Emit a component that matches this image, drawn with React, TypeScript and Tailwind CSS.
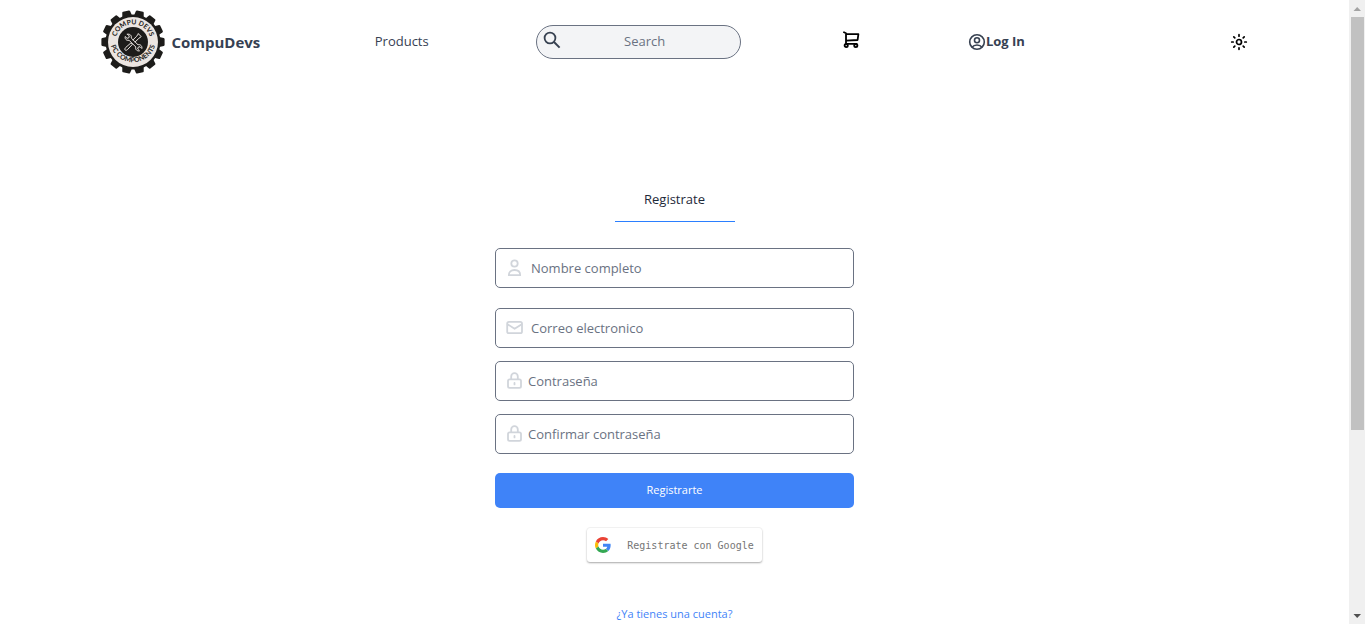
import React from "react";

const teeth = Array.from({ length: 14 }, (_, i) => (i + 0.5) * (360 / 14));

function Logo() {
  return (
    <svg viewBox="0 0 64 64" className="h-16 w-16 shrink-0" role="img" aria-label="CompuDevs logo">
      <g fill="#1d1c1a">
        {teeth.map((angle) => (
          <path key={angle} d="M26.8 7 28 1.2Q28.3 0.4 29 0.4H35Q35.7 0.4 36 1.2L37.2 7Z" transform={`rotate(${angle} 32 32)`} />
        ))}
        <circle cx="32" cy="32" r="27.5" />
      </g>
      <circle cx="32" cy="32" r="25" fill="#ebe5e1" />
      <circle cx="32" cy="32" r="15" fill="#1d1c1a" />
      <defs>
        <path id="logo-top" d="M14.3 32A17.7 17.7 0 0 1 49.7 32" />
        <path id="logo-bottom" d="M8.8 29A23.2 23.2 0 0 0 55.2 29" />
      </defs>
      <g fill="#1d1c1a" fontFamily="Lato, sans-serif" fontWeight="700" textAnchor="middle">
        <text fontSize="6.8"><textPath href="#logo-top" startOffset="50%">COMPU DEVS</textPath></text>
        <text fontSize="6.8"><textPath href="#logo-bottom" startOffset="50%">PC COMPONENTS</textPath></text>
      </g>
      <g fill="none" stroke="#ebe5e1" strokeWidth="1" strokeLinecap="round" strokeLinejoin="round">
        <path d="M26.5 24.2 28.3 26 27.8 27.8 26 28.3 24.2 26.5C23.6 28.8 25.5 31 28 30.2L34.8 37C34 39.5 36.2 41.4 38.5 40.8L36.7 39 37.2 37.2 39 36.7 40.8 38.5C41.4 36.2 39.5 34 37 34.8L30.2 28C31 25.5 28.8 23.6 26.5 24.2Z" />
        <path d="M37.4 23.8 40.2 26.6 37.8 28.4 34.1 32M37.4 23.8 35.6 26.3 32 29.9M31 34.2 29.8 33 24.6 37.6C22.8 39.6 24.5 41.5 26.4 39.7Z" />
      </g>
    </svg>
  );
}

function UserIcon() {
  return (
    <svg viewBox="0 0 18 18" className="h-[18px] w-[18px]" fill="none" stroke="#d1d5db" strokeWidth="1.8" strokeLinejoin="round" aria-hidden="true">
      <circle cx="8.5" cy="4.5" r="3.2" />
      <path d="M2.8 16.2C2.8 12.8 5 11 8.5 11S14.2 12.8 14.2 16.2Z" />
    </svg>
  );
}

function MailIcon() {
  return (
    <svg viewBox="0 0 18 18" className="h-[18px] w-[18px]" fill="none" stroke="#d1d5db" strokeWidth="1.8" strokeLinejoin="round" strokeLinecap="round" aria-hidden="true">
      <rect x="1.2" y="2.8" width="14.8" height="11.4" rx="1.8" />
      <path d="M1.8 5.4 8.6 9.8 15.4 5.4" />
    </svg>
  );
}

function LockIcon() {
  return (
    <svg viewBox="0 0 18 18" className="h-[18px] w-[18px]" fill="none" stroke="#d1d5db" strokeWidth="1.8" strokeLinejoin="round" strokeLinecap="round" aria-hidden="true">
      <rect x="2" y="7.4" width="13" height="8.4" rx="1.6" />
      <path d="M5.2 7V4.4a3.3 3.3 0 0 1 6.6 0V7M8.5 11v1.4" />
    </svg>
  );
}

function GoogleIcon() {
  return (
    <svg viewBox="0 0 48 48" className="h-4 w-4" aria-hidden="true">
      <path fill="#ea4335" d="M24 9.5c3.54 0 6.71 1.22 9.21 3.6l6.85-6.85C35.9 2.38 30.47 0 24 0 14.62 0 6.51 5.38 2.56 13.22l7.98 6.19C12.43 13.72 17.74 9.5 24 9.5z" />
      <path fill="#4285f4" d="M46.98 24.55c0-1.57-.15-3.09-.38-4.55H24v9.02h12.94c-.58 2.96-2.26 5.48-4.78 7.18l7.73 6c4.51-4.18 7.09-10.36 7.09-17.65z" />
      <path fill="#fbbc05" d="M10.53 28.59c-.48-1.45-.76-2.99-.76-4.59s.27-3.14.76-4.59l-7.98-6.19C.92 16.46 0 20.12 0 24c0 3.88.92 7.54 2.56 10.78l7.97-6.19z" />
      <path fill="#34a853" d="M24 48c6.48 0 11.93-2.13 15.89-5.81l-7.73-6c-2.15 1.45-4.92 2.3-8.16 2.3-6.26 0-11.57-4.22-13.47-9.91l-7.98 6.19C6.51 42.62 14.62 48 24 48z" />
    </svg>
  );
}

type FieldProps = { id: string; label: string; type: string; icon: React.ReactNode; wide?: boolean };

function Field({ id, label, type, icon, wide }: FieldProps) {
  return (
    <div className="flex h-10 items-center rounded-[5px] border border-gray-500 bg-white pl-2.5">
      <label htmlFor={id} aria-label={label}>{icon}</label>
      <input
        id={id}
        type={type}
        placeholder={label}
        className={`h-full min-w-0 flex-1 bg-transparent text-[13px] text-gray-700 outline-none placeholder:text-gray-500 ${wide ? "pl-[7px]" : "pl-1"}`}
      />
    </div>
  );
}

function Header() {
  return (
    <header className="flex h-[84px] items-center justify-evenly text-gray-700">
      <a href="#home" className="flex w-[172px] items-center gap-[6px] text-[15px] font-bold">
        <Logo />
        CompuDevs
      </a>
      <a href="#products" className="w-[60px] text-[13px]">Products</a>
      <form role="search" className="flex h-[34px] w-[205px] items-center rounded-full border border-gray-500 bg-gray-100 pr-3 pl-1.5">
        <button type="button" aria-label="Search" className="shrink-0 pb-1">
          <svg viewBox="0 0 18 18" className="h-[18px] w-[18px]" fill="none" stroke="#374151" strokeWidth="1.8" aria-hidden="true">
            <circle cx="7" cy="7" r="5.4" />
            <path d="M11 11 16.6 16.6" strokeWidth="2" />
          </svg>
        </button>
        <input aria-label="Search" placeholder="Search" className="min-w-0 flex-1 bg-transparent text-center text-[13px] outline-none placeholder:text-gray-500" />
      </form>
      <button type="button" aria-label="Cart" className="w-6 pb-1">
        <svg viewBox="0 0 18 18" className="h-[18px] w-[18px]" fill="none" stroke="#000" strokeWidth="1.8" strokeLinejoin="round" strokeLinecap="round" aria-hidden="true">
          <path d="M1 1.3 3 2.2V12.8H13.6M3.2 3.2H15.4L14.6 9 3.2 9.6" />
          <circle cx="3.2" cy="14.6" r="1.6" />
          <circle cx="12.8" cy="14.6" r="1.6" />
        </svg>
      </button>
      <a href="#login" className="flex w-[59px] items-center text-[13px] font-bold whitespace-nowrap">
        <svg viewBox="0 0 18 18" className="h-[18px] w-[18px] shrink-0" fill="none" stroke="#374151" strokeWidth="1.6" aria-hidden="true">
          <circle cx="9" cy="9" r="7.3" />
          <circle cx="9" cy="7.2" r="2.5" />
          <path d="M4 14.2C5.2 12.6 6.8 12 9 12S12.8 12.6 14 14.2" />
        </svg>
        Log In
      </a>
      <span />
      <button type="button" aria-label="Toggle theme">
        <svg viewBox="0 0 18 18" className="h-[18px] w-[18px]" fill="none" stroke="#000" strokeWidth="1.7" strokeLinecap="round" aria-hidden="true">
          <circle cx="9" cy="9" r="2.5" />
          <path d="M9 1.7V3.2M9 14.8V16.3M1.7 9H3.2M14.8 9H16.3M3.8 3.8 4.8 4.8M13.2 13.2 14.2 14.2M3.8 14.2 4.8 13.2M13.2 4.8 14.2 3.8" />
        </svg>
      </button>
    </header>
  );
}

export default function App() {
  return (
    <div className="flex h-screen overflow-hidden bg-white font-['Open_Sans','Noto_Sans',sans-serif]">
      <div className="min-w-0 flex-1">
        <Header />
        <main className="mx-auto flex w-full max-w-[359px] flex-col items-center pt-[104px]">
          <h1 className="w-[120px] border-b border-blue-500 pb-2.5 text-center text-[13px] leading-[23px] text-gray-800">Registrate</h1>
          <form className="mt-[26px] flex w-full flex-col">
            <div className="flex flex-col gap-5">
              <Field id="name" type="text" label="Nombre completo" icon={<UserIcon />} wide />
              <Field id="email" type="email" label="Correo electronico" icon={<MailIcon />} wide />
            </div>
            <div className="mt-[13px] flex flex-col gap-[13px]">
              <Field id="password" type="password" label="Contraseña" icon={<LockIcon />} />
              <Field id="confirm" type="password" label="Confirmar contraseña" icon={<LockIcon />} />
            </div>
            <button type="submit" className="mt-[19px] h-[35px] rounded-[5px] bg-[#3f83f8] text-[11px] text-white">Registrarte</button>
          </form>
          <button type="button" className="mt-5 flex h-[34px] items-center gap-4 rounded-[3px] bg-white px-2 font-['DejaVu_Sans_Mono',monospace] text-[10px] text-[#757575] shadow-[0_-1px_0_rgba(0,0,0,0.04),0_1px_2px_rgba(0,0,0,0.35)]">
            <GoogleIcon />
            Registrate con Google
          </button>
          <a href="#login" className="mt-11 text-[11px] leading-4 text-[#3f83f8]">¿Ya tienes una cuenta?</a>
        </main>
      </div>
      <div aria-hidden="true" className="flex w-4 flex-col items-center bg-[#f0f0f0]">
        <svg viewBox="0 0 16 17" className="h-[17px] w-4 shrink-0"><path d="M4.5 11 8.2 7 12 11Z" fill="#a3a3a3" /></svg>
        <div className="w-full flex-1 pr-px pl-0.5"><div className="h-[70%] bg-[#c1c1c1]" /></div>
        <svg viewBox="0 0 16 17" className="h-[17px] w-4 shrink-0"><path d="M4.5 7H12L8.2 11Z" fill="#505050" /></svg>
      </div>
    </div>
  );
}
